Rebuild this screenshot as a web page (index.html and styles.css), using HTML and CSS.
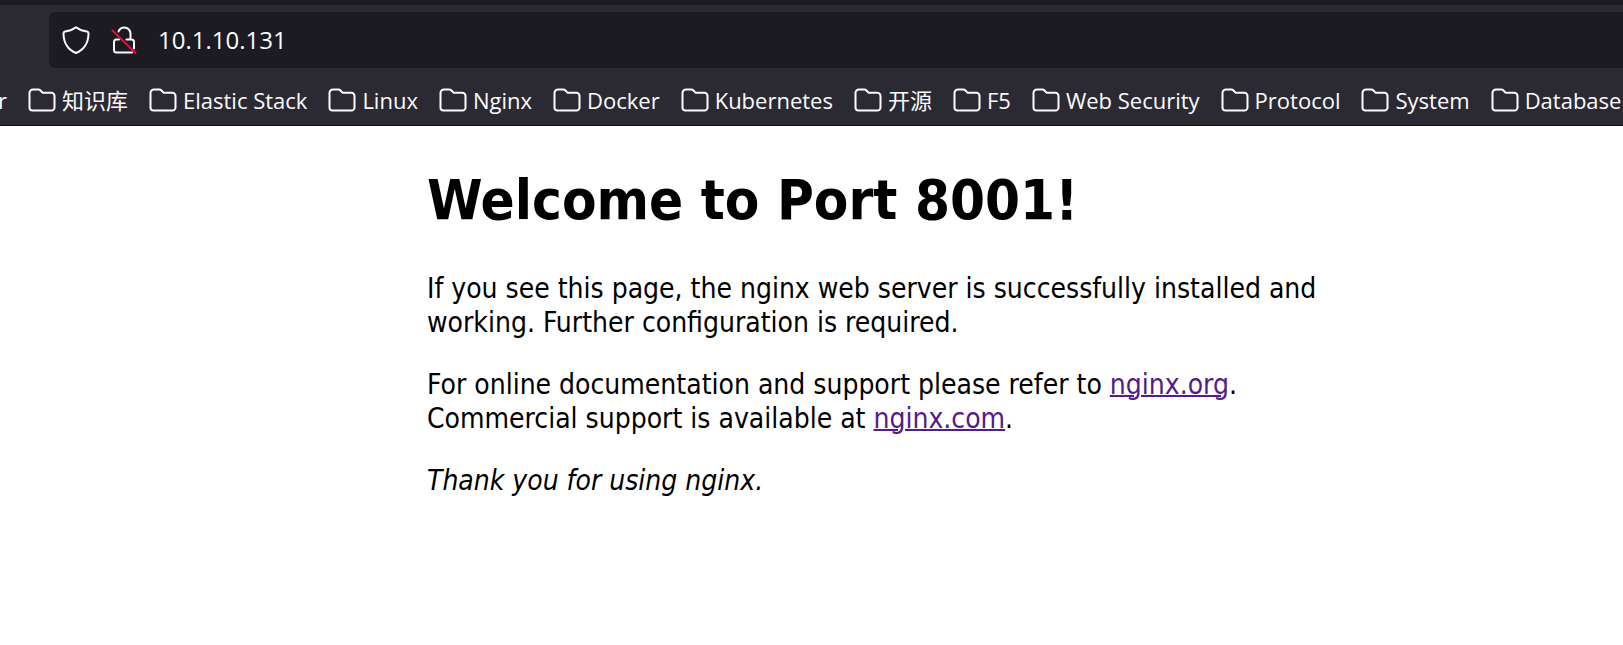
FILE: index.html
```
<!DOCTYPE html>
<html lang="en">
<head>
    <meta charset="UTF-8">
    <title>Welcome to Port 8001!</title>
    <meta name="viewport" content="width=device-width, initial-scale=1">
    <link rel="stylesheet" href="styles.css">
</head>
<body>

<svg class="defs" aria-hidden="true">
    <symbol id="folder" viewBox="0 0 28 24">
        <path d="M5 1.5h5.2c.9 0 1.7.3 2.3 1l2 2.2h8.800a3.200 3.200 0 0 1 3.200 3.200v11.600a3 3 0 0 1-3 3H4.500a3 3 0 0 1-3-3V5A3.500 3.500 0 0 1 5 1.500z"/>
    </symbol>
</svg>

<header class="browser">
    <div class="toolbar">
        <div class="urlbar">
            <button class="icon-btn" aria-label="Tracking protection">
                <svg width="28" height="28" viewBox="0 0 28 28">
                    <path d="M14 1.2C10.5 3.8 6.5 5.3 3 5.6Q1.5 5.8 1.5 7.5C1.6 16.5 5.5 23.5 14 27C22.5 23.5 26.4 16.5 26.5 7.5Q26.5 5.8 25 5.6C21.5 5.3 17.5 3.8 14 1.2z"/>
                </svg>
            </button>
            <button class="icon-btn" aria-label="Connection is not secure">
                <svg width="28" height="28" viewBox="0 0 28 28">
                    <path d="M8.5 5.5C9.5 3 11.5 1.5 14.3 1.5A6.200 6.200 0 0 1 20.5 7.7V13.5M9 13.5H6.500a2.500 2.500 0 0 0-2.500 2.500v8a2.500 2.500 0 0 0 2.500 2.500h15.500M16.500 13.500h5a2.500 2.500 0 0 1 2.500 2.500v6.500"/>
                    <path class="slash" d="M2.500 4.500L25.500 27"/>
                </svg>
            </button>
            <input class="address" type="text" value="10.1.10.131" aria-label="Address">
        </div>
    </div>
    <nav class="bookmarks">
        <a href="#">r</a>
        <a href="#"><svg><use href="#folder"/></svg>知识库</a>
        <a href="#"><svg><use href="#folder"/></svg>Elastic Stack</a>
        <a href="#"><svg><use href="#folder"/></svg>Linux</a>
        <a href="#"><svg><use href="#folder"/></svg>Nginx</a>
        <a href="#"><svg><use href="#folder"/></svg>Docker</a>
        <a href="#"><svg><use href="#folder"/></svg>Kubernetes</a>
        <a href="#"><svg><use href="#folder"/></svg>开源</a>
        <a href="#"><svg><use href="#folder"/></svg>F5</a>
        <a href="#"><svg><use href="#folder"/></svg>Web Security</a>
        <a href="#"><svg><use href="#folder"/></svg>Protocol</a>
        <a href="#"><svg><use href="#folder"/></svg>System</a>
        <a href="#"><svg><use href="#folder"/></svg>Database</a>
    </nav>
</header>

<main>
    <h1>Welcome to Port 8001!</h1>
    <p>If you see this page, the nginx web server is successfully installed and
    working. Further configuration is required.</p>

    <p>For online documentation and support please refer to
    <a href="http://nginx.org/">nginx.org</a>.<br>
    Commercial support is available at
    <a href="http://nginx.com/">nginx.com</a>.</p>

    <p><em>Thank you for using nginx.</em></p>
</main>

</body>
</html>
```
FILE: styles.css
```
body {
    margin: 0;
    background: #fff;
    color: #000;
    font-family: Tahoma, "DejaVu Sans Condensed", "DejaVu Sans", sans-serif;
    font-size: 28px;
    line-height: 34px;
}
.defs {
    display: none;
}
svg {
    flex: none;
    fill: none;
    stroke: #fbfbfe;
    stroke-width: 2;
    stroke-linecap: round;
    stroke-linejoin: round;
}
.browser {
    background-color: #2b2a33;
    color: #fbfbfe;
    border-top: 5px solid #1c1b22;
    border-bottom: 1px solid #0c0c0d;
    font-family: "Segoe UI", "Open Sans", "Noto Sans CJK SC", sans-serif;
    overflow: hidden;
}
.toolbar {
    padding: 7px 0 0 49px;
}
.urlbar {
    display: flex;
    align-items: center;
    height: 56px;
    padding-left: 13px;
    background-color: #1c1b22;
    border-radius: 6px 0 0 6px;
}
.icon-btn {
    display: flex;
    margin-right: 20px;
    padding: 0;
    background: none;
    border: none;
    cursor: pointer;
}
.slash {
    stroke: #ff0039;
}
.address {
    flex: 1;
    min-width: 0;
    padding: 0 0 2px;
    background: none;
    border: none;
    outline: none;
    color: inherit;
    font-family: inherit;
    font-size: 24px;
}
.bookmarks {
    display: flex;
    gap: 21px;
    height: 51px;
    padding-top: 6px;
    margin-left: -2px;
    align-items: center;
    white-space: nowrap;
}
.bookmarks a {
    display: flex;
    align-items: center;
    gap: 6px;
    color: inherit;
    font-size: 22px;
    text-decoration: none;
}
.bookmarks svg {
    width: 28px;
    height: 24px;
}
main {
    max-width: 980px;
    margin-left: 427px;
}
h1 {
    margin: 40px 0 38px;
    font-size: 56px;
    line-height: 68px;
}
p {
    margin: 28px 0;
}
main a {
    color: #551a8b;
    text-decoration-thickness: 2px;
}
```
